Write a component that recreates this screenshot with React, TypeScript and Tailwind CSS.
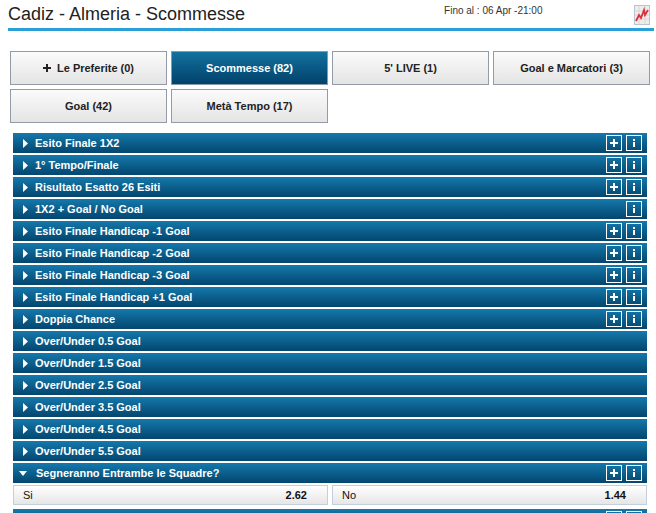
const tabs = [
  { label: "Le Preferite (0)", plus: true },
  { label: "Scommesse (82)", active: true },
  { label: "5' LIVE (1)" },
  { label: "Goal e Marcatori (3)" },
  { label: "Goal (42)" },
  { label: "Metà Tempo (17)" },
];

const rows: { label: string; plus?: boolean; info?: boolean }[] = [
  { label: "Esito Finale 1X2", plus: true, info: true },
  { label: "1° Tempo/Finale", plus: true, info: true },
  { label: "Risultato Esatto 26 Esiti", plus: true, info: true },
  { label: "1X2 + Goal / No Goal", info: true },
  { label: "Esito Finale Handicap -1 Goal", plus: true, info: true },
  { label: "Esito Finale Handicap -2 Goal", plus: true, info: true },
  { label: "Esito Finale Handicap -3 Goal", plus: true, info: true },
  { label: "Esito Finale Handicap +1 Goal", plus: true, info: true },
  { label: "Doppia Chance", plus: true, info: true },
  { label: "Over/Under 0.5 Goal" },
  { label: "Over/Under 1.5 Goal" },
  { label: "Over/Under 2.5 Goal" },
  { label: "Over/Under 3.5 Goal" },
  { label: "Over/Under 4.5 Goal" },
  { label: "Over/Under 5.5 Goal" },
];

function Buttons({ plus, info }: { plus?: boolean; info?: boolean }) {
  return (
    <div className="flex ml-auto mr-[5px] gap-[4px]">
      {plus && (
        <div className="w-[16px] h-[16px] border border-white flex items-center justify-center">
          <svg width="10" height="10" viewBox="0 0 10 10">
            <path d="M4 1h2v3h3v2H6v3H4V6H1V4h3z" fill="#fff" />
          </svg>
        </div>
      )}
      {info && (
        <div className="w-[16px] h-[16px] border border-white flex items-center justify-center">
          <svg width="4" height="10" viewBox="0 0 4 10">
            <path d="M1 1h2v2H1zM1 4h2v5H1z" fill="#fff" />
          </svg>
        </div>
      )}
    </div>
  );
}

function Bar({ label, plus, info, open }: { label: string; plus?: boolean; info?: boolean; open?: boolean }) {
  return (
    <div className="h-[20px] flex items-center bg-gradient-to-b from-[#1579ac] to-[#04466f] text-white font-bold text-[11px]">
      {open ? (
        <svg width="8" height="5" viewBox="0 0 8 5" className="ml-[6px] mr-[9px]">
          <path d="M0 0h8L4 5z" fill="#fff" />
        </svg>
      ) : (
        <svg width="5" height="9" viewBox="0 0 5 9" className="ml-[10px] mr-[7px]">
          <path d="M0 0l5 4.5-5 4.5z" fill="#fff" />
        </svg>
      )}
      <span>{label}</span>
      <Buttons plus={plus} info={info} />
    </div>
  );
}

function Odd({ name, value }: { name: string; value: string }) {
  return (
    <div className="h-[20px] flex items-center justify-between pl-[9px] pr-[20px] border border-[#c3cfdc] bg-gradient-to-b from-white to-[#e6e6e6] text-[11px] text-[#111]">
      <span>{name}</span>
      <span className="font-bold">{value}</span>
    </div>
  );
}

export default function App() {
  return (
    <div className="w-[656px] h-[513px] overflow-hidden bg-white font-['Liberation_Sans',Arial,sans-serif]">
      <div className="ml-[8px] mr-[2px] h-[31px] border-b-[3px] border-[#2ba0d8] flex">
        <div className="text-[18px] leading-[21px] mt-[4px] text-[#222]">Cadiz - Almeria - Scommesse</div>
        <div className="ml-[199px] mt-[5px] text-[10px] leading-[12px] text-[#333]">Fino al : 06 Apr -21:00</div>
        <div className="ml-auto mr-[4px] mt-[5px] w-[16px] h-[20px] border border-[#b8c4d4] bg-[#efecec]">
          <svg width="14" height="18" viewBox="0 0 14 18">
            <path d="M0 5h14M0 9h14M0 13h14M4 0v18M10 0v18" stroke="#dcd6d6" strokeWidth="1" />
            <path d="M1 15l3-6 2 3 3-8 1 5 3-5" fill="none" stroke="#d9333f" strokeWidth="1.8" />
          </svg>
        </div>
      </div>

      <div className="grid grid-cols-[157px_157px_157px_157px] gap-[4px] ml-[10px] mt-[20px]">
        {tabs.map((t) => (
          <div
            key={t.label}
            className={
              t.active
                ? "h-[34px] flex items-center justify-center border border-[#8a9aac] bg-gradient-to-b from-[#13729f] to-[#03426b] text-white font-bold text-[11px]"
                : "h-[34px] flex items-center justify-center border border-[#939aa8] bg-gradient-to-b from-[#fbfbfb] to-[#e4e4e4] text-[#222] font-bold text-[11px]"
            }
          >
            {t.plus && (
              <svg width="8" height="8" viewBox="0 0 8 8" className="mr-[6px] -mt-[1px]">
                <path d="M3 0h2v3h3v2H5v3H3V5H0V3h3z" fill="#222" />
              </svg>
            )}
            {t.label}
          </div>
        ))}
      </div>

      <div className="ml-[13px] w-[634px] mt-[10px] flex flex-col gap-[2px]">
        {rows.map((r) => (
          <Bar key={r.label} {...r} />
        ))}
        <Bar label="Segneranno Entrambe le Squadre?" plus info open />
        <div className="grid grid-cols-[315px_315px] gap-[4px]">
          <Odd name="Si" value="2.62" />
          <Odd name="No" value="1.44" />
        </div>
        <div className="mt-[2px]">
          <Bar label="" plus info />
        </div>
      </div>
    </div>
  );
}
